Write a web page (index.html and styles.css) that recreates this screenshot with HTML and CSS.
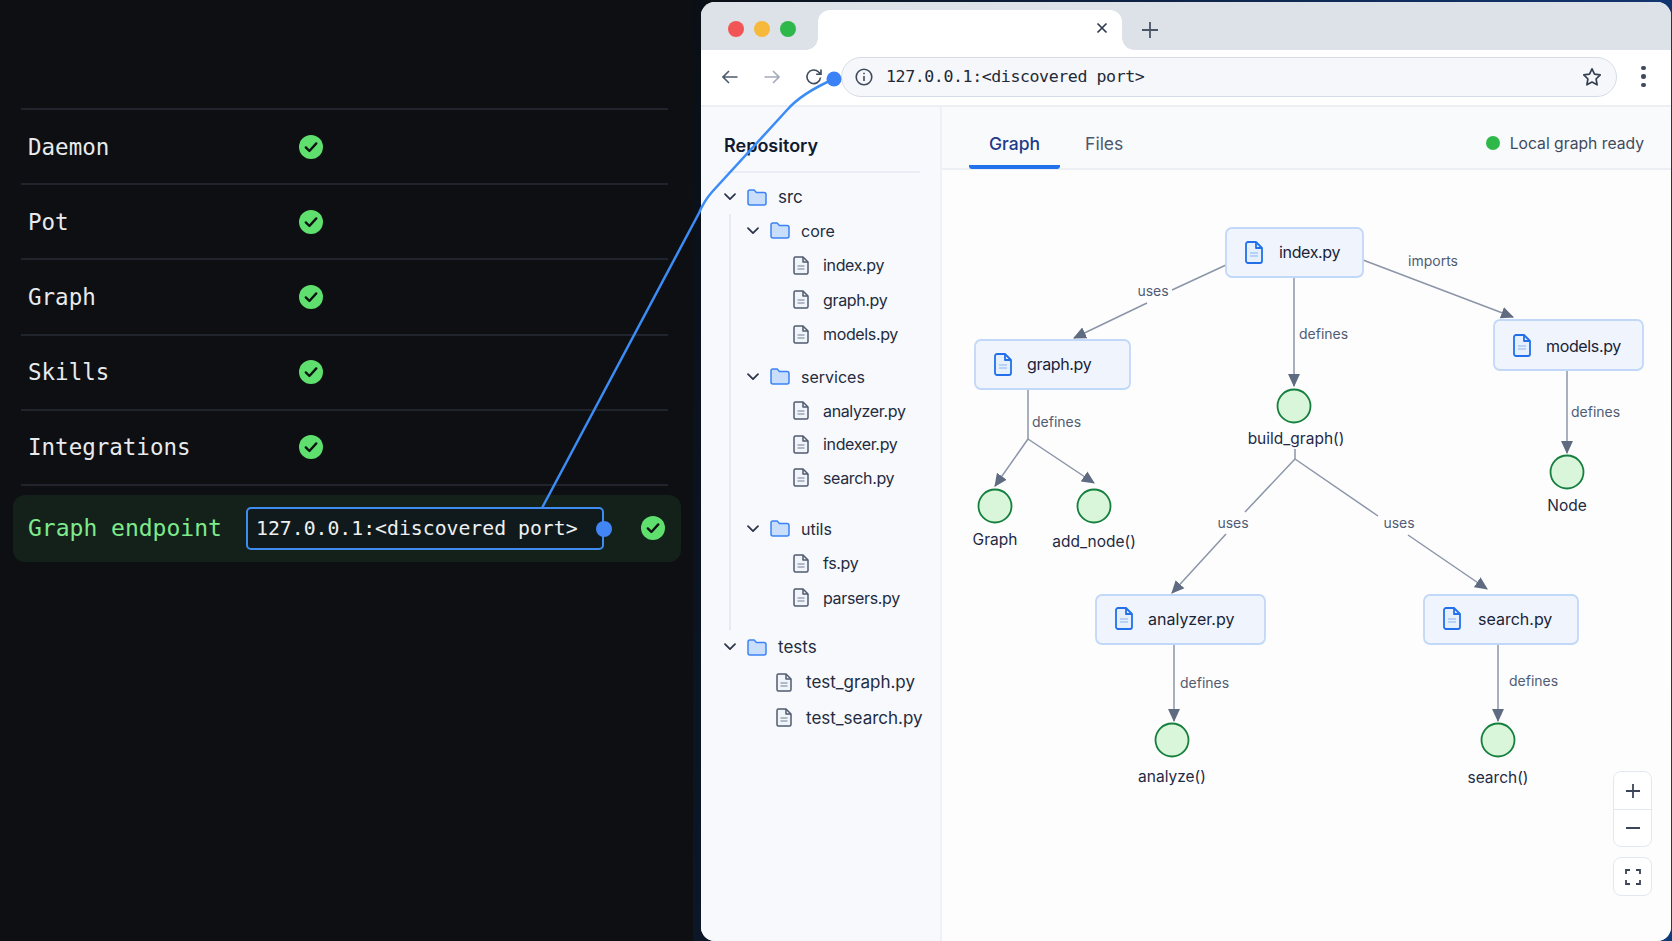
FILE: index.html
```html
<!DOCTYPE html>
<html>
  <head>
    <meta charset="utf-8">
    <title>Local graph</title>
    <link rel="stylesheet" href="styles.css">
  </head>
  <body>
    <svg class="defs" width="0" height="0">
      <symbol id="i-check" viewBox="0 0 24 24">
        <circle cx="12" cy="12" r="12" fill="#5fe06e"/>
        <path d="M6.8 12.4l3.6 3.6 6.9-7.6" fill="none" stroke="#0d1512" stroke-width="2.4" stroke-linecap="round" stroke-linejoin="round"/>
      </symbol>
      <symbol id="i-chevron" viewBox="0 0 12 8">
        <path d="M1 1.2l5 5 5-5" fill="none" stroke="#2b3448" stroke-width="1.7" stroke-linecap="round" stroke-linejoin="round"/>
      </symbol>
      <symbol id="i-folder" viewBox="0 0 20 17">
        <path d="M1 3a2 2 0 0 1 2-2h4.2l2.2 2.4H17a2 2 0 0 1 2 2V14a2 2 0 0 1-2 2H3a2 2 0 0 1-2-2z" fill="#c9defa" stroke="#3b82f6" stroke-width="1.5" stroke-linejoin="round"/>
      </symbol>
      <symbol id="i-file" viewBox="0 0 16 19">
        <path d="M1 2.5A1.5 1.5 0 0 1 2.5 1H10l5 5v10.5a1.5 1.5 0 0 1-1.5 1.5h-11A1.5 1.5 0 0 1 1 16.5z" fill="#f1f4f8" stroke="#505b70" stroke-width="1.5" stroke-linejoin="round"/>
        <path d="M10 1v5h5" fill="none" stroke="#505b70" stroke-width="1.5" stroke-linejoin="round"/>
        <path d="M4.5 10h7M4.5 13h7" stroke="#9aa5b7" stroke-width="1.4"/>
      </symbol>
      <symbol id="i-file-blue" viewBox="0 0 18 23">
        <path d="M1 3a2 2 0 0 1 2-2h8l6 6v13a2 2 0 0 1-2 2H3a2 2 0 0 1-2-2z" fill="#e6effc" stroke="#2170ea" stroke-width="1.8" stroke-linejoin="round"/>
        <path d="M11 1v6h6" fill="none" stroke="#2170ea" stroke-width="1.8" stroke-linejoin="round"/>
        <path d="M5 12h8M5 15h8" stroke="#a9c8f5" stroke-width="1.6"/>
      </symbol>
    </svg>

    <section class="status-panel">
      <div class="status-row"><span class="status-name">Daemon</span><svg class="check"><use href="#i-check"/></svg></div>
      <div class="status-row"><span class="status-name">Pot</span><svg class="check"><use href="#i-check"/></svg></div>
      <div class="status-row"><span class="status-name">Graph</span><svg class="check"><use href="#i-check"/></svg></div>
      <div class="status-row"><span class="status-name">Skills</span><svg class="check"><use href="#i-check"/></svg></div>
      <div class="status-row"><span class="status-name">Integrations</span><svg class="check"><use href="#i-check"/></svg></div>
      <div class="endpoint-divider"></div>
      <div class="endpoint-row">
        <span class="endpoint-name">Graph endpoint</span>
        <div class="endpoint-box">127.0.0.1:&lt;discovered port&gt;<i class="endpoint-dot"></i></div>
        <svg class="check"><use href="#i-check"/></svg>
      </div>
    </section>

    <section class="browser-area">
      <div class="browser">
        <div class="titlebar">
          <i class="light red"></i><i class="light amber"></i><i class="light green"></i>
          <div class="tab">
            <svg class="tab-close" viewBox="0 0 12 12"><path d="M1.5 1.5l9 9M10.5 1.5l-9 9"/></svg>
          </div>
          <svg class="tab-new" viewBox="0 0 16 16"><path d="M8 0v16M0 8h16"/></svg>
        </div>

        <div class="toolbar">
          <svg class="nav-icon" viewBox="0 0 16 14"><path d="M15.5 7H1M7 1L1 7l6 6"/></svg>
          <svg class="nav-icon forward" viewBox="0 0 16 14"><path d="M.5 7H15M9 1l6 6-6 6"/></svg>
          <svg class="nav-icon reload" viewBox="0 0 18 18"><path d="M15.5 9.5A6.8 6.8 0 1 1 13.6 4L16 6.300M16 1.500v4.800h-4.800"/></svg>
          <div class="addressbar">
            <svg class="info-icon" viewBox="0 0 18 18"><circle cx="9" cy="9" r="7.800"/><path d="M9 8v5M9 4.800v1.500"/></svg>
            <span class="address-text">127.0.0.1:&lt;discovered port&gt;</span>
            <svg class="star-icon" viewBox="0 0 20 20"><path d="M10 1.800l2.500 5.300 5.700.8-4.100 4.100 1 5.800L10 15.100l-5.100 2.700 1-5.800-4.100-4.100 5.700-.8z"/></svg>
          </div>
          <div class="menu-dots"><i></i><i></i><i></i></div>
        </div>

        <div class="content">
          <aside class="sidebar">
            <h2 class="sidebar-title">Repository</h2>
            <div class="tree">
              <div class="row root"><svg class="chev"><use href="#i-chevron"/></svg><svg class="folder"><use href="#i-folder"/></svg><span>src</span></div>
              <div class="src-children">
                <div class="row sub"><svg class="chev"><use href="#i-chevron"/></svg><svg class="folder"><use href="#i-folder"/></svg><span>core</span></div>
                <div class="row file"><svg class="doc"><use href="#i-file"/></svg><span>index.py</span></div>
                <div class="row file"><svg class="doc"><use href="#i-file"/></svg><span>graph.py</span></div>
                <div class="row file"><svg class="doc"><use href="#i-file"/></svg><span>models.py</span></div>
                <div class="row sub services"><svg class="chev"><use href="#i-chevron"/></svg><svg class="folder"><use href="#i-folder"/></svg><span>services</span></div>
                <div class="row file tight"><svg class="doc"><use href="#i-file"/></svg><span>analyzer.py</span></div>
                <div class="row file tight"><svg class="doc"><use href="#i-file"/></svg><span>indexer.py</span></div>
                <div class="row file tight"><svg class="doc"><use href="#i-file"/></svg><span>search.py</span></div>
                <div class="row sub utils"><svg class="chev"><use href="#i-chevron"/></svg><svg class="folder"><use href="#i-folder"/></svg><span>utils</span></div>
                <div class="row file"><svg class="doc"><use href="#i-file"/></svg><span>fs.py</span></div>
                <div class="row file"><svg class="doc"><use href="#i-file"/></svg><span>parsers.py</span></div>
              </div>
              <div class="row root"><svg class="chev"><use href="#i-chevron"/></svg><svg class="folder"><use href="#i-folder"/></svg><span>tests</span></div>
              <div class="row test-file"><svg class="doc"><use href="#i-file"/></svg><span>test_graph.py</span></div>
              <div class="row test-file"><svg class="doc"><use href="#i-file"/></svg><span>test_search.py</span></div>
            </div>
          </aside>

          <main class="main">
            <div class="main-head">
              <div class="main-tab active">Graph</div>
              <div class="main-tab">Files</div>
              <div class="ready"><i class="ready-dot"></i>Local graph ready</div>
            </div>
            <div class="canvas">
              <!-- viewBox uses page coordinates -->
              <svg class="graph" viewBox="942 170 729 771">
                <defs>
                  <marker id="arrow" viewBox="0 0 12 12" refX="11" refY="6" markerWidth="13" markerHeight="13" markerUnits="userSpaceOnUse" orient="auto">
                    <path d="M0 0.500L12 6 0 11.500z" fill="#5f6b80"/>
                  </marker>
                </defs>

                <path class="edge" d="M1226 265L1172 290"/>
                <path class="edge tip" d="M1147 303L1074 338"/>
                <path class="edge tip" d="M1294 277V386"/>
                <path class="edge tip" d="M1363 260L1513 317"/>
                <path class="edge tip" d="M1567 370V453"/>
                <path class="edge" d="M1028 389V439"/>
                <path class="edge tip" d="M1028 439L995 486"/>
                <path class="edge tip" d="M1028 439L1094 483"/>
                <path class="edge" d="M1295 449V459L1245 512M1295 459L1378 516"/>
                <path class="edge tip" d="M1226 534L1172 593"/>
                <path class="edge tip" d="M1408 535L1487 589"/>
                <path class="edge tip" d="M1174 644V721"/>
                <path class="edge tip" d="M1498 644V721"/>

                <text class="edge-label middle" x="1153" y="290">uses</text>
                <text class="edge-label" x="1299" y="333">defines</text>
                <text class="edge-label middle" x="1433" y="260">imports</text>
                <text class="edge-label" x="1032" y="421">defines</text>
                <text class="edge-label" x="1571" y="411">defines</text>
                <text class="edge-label middle" x="1233" y="522">uses</text>
                <text class="edge-label middle" x="1399" y="522">uses</text>
                <text class="edge-label" x="1180" y="682">defines</text>
                <text class="edge-label" x="1509" y="680">defines</text>

                <rect class="box" x="1226" y="228" width="137" height="49" rx="6"/>
                <use href="#i-file-blue" x="1245" y="241" width="18" height="23"/>
                <text class="box-label narrow" x="1279" y="252">index.py</text>

                <rect class="box" x="975" y="340" width="155" height="49" rx="6"/>
                <use href="#i-file-blue" x="994" y="353" width="18" height="23"/>
                <text class="box-label narrow" x="1027" y="364">graph.py</text>

                <rect class="box" x="1494" y="320" width="149" height="50" rx="6"/>
                <use href="#i-file-blue" x="1513" y="334" width="18" height="23"/>
                <text class="box-label narrow" x="1546" y="346">models.py</text>

                <rect class="box" x="1096" y="595" width="169" height="49" rx="6"/>
                <use href="#i-file-blue" x="1115" y="607" width="18" height="23"/>
                <text class="box-label" x="1148" y="619">analyzer.py</text>

                <rect class="box" x="1424" y="595" width="154" height="49" rx="6"/>
                <use href="#i-file-blue" x="1443" y="607" width="18" height="23"/>
                <text class="box-label" x="1478" y="619">search.py</text>

                <circle class="fn" cx="1294" cy="406" r="16.500"/>
                <circle class="fn" cx="995" cy="506" r="16.500"/>
                <circle class="fn" cx="1094" cy="506" r="16.500"/>
                <circle class="fn" cx="1567" cy="472" r="16.500"/>
                <circle class="fn" cx="1172" cy="740" r="16.500"/>
                <circle class="fn" cx="1498" cy="740" r="16.500"/>

                <text class="fn-label" x="1296" y="438">build_graph()</text>
                <text class="fn-label" x="995" y="539">Graph</text>
                <text class="fn-label" x="1094" y="541">add_node()</text>
                <text class="fn-label" x="1567" y="505">Node</text>
                <text class="fn-label" x="1172" y="776">analyze()</text>
                <text class="fn-label" x="1498" y="777">search()</text>
              </svg>

              <div class="zoom-tools">
                <div class="zoom-group">
                  <div class="zoom-btn"><svg viewBox="0 0 16 16"><path d="M8 1v14M1 8h14"/></svg></div>
                  <div class="zoom-btn"><svg viewBox="0 0 16 16"><path d="M1 8h14"/></svg></div>
                </div>
                <div class="zoom-group">
                  <div class="zoom-btn"><svg viewBox="0 0 16 16"><path d="M1 5V1h4M11 1h4v4M15 11v4h-4M5 15H1v-4"/></svg></div>
                </div>
              </div>
            </div>
          </main>
        </div>
      </div>
    </section>

    <!-- blue connector from the endpoint field to the address bar -->
    <svg class="connector" viewBox="0 0 1672 941">
      <path d="M542 508L699 213Q704 201 712 192L787 110Q802 93 834 79"/>
      <circle cx="834" cy="79" r="7.500"/>
    </svg>
  </body>
</html>
```

FILE: styles.css
```css
* {
  box-sizing: border-box;
}

body {
  display: flex;
  width: 1672px;
  height: 941px;
  margin: 0;
  overflow: hidden;
  background-color: #0d0f13;
  font-family: "Inter", "Liberation Sans", sans-serif;
}

.defs {
  position: absolute;
}

/* left terminal panel */
.status-panel {
  width: 693px;
  flex-shrink: 0;
  padding: 108px 25px 0 21px;
  background-color: #0d0f13;
  font-family: "DejaVu Sans Mono", "Liberation Mono", monospace;
}

.status-row {
  display: flex;
  align-items: center;
  height: 75.200px;
  padding-left: 7px;
  border-top: 2px solid #20242d;
  color: #e8eaec;
  font-size: 22.500px;
}

.status-name {
  width: 271px;
}

.check {
  width: 24px;
  height: 24px;
}

.endpoint-divider {
  height: 2px;
  background-color: #20242d;
}

.endpoint-row {
  display: flex;
  align-items: center;
  height: 67px;
  margin: 9px -13px 0 -8px;
  padding-left: 15px;
  border-radius: 12px;
  background-color: #14211a;
}

.endpoint-name {
  width: 218px;
  color: #7eea8b;
  font-size: 23px;
}

.endpoint-box {
  position: relative;
  width: 358px;
  height: 43px;
  padding-left: 8px;
  border: 2px solid #3f8cf0;
  border-radius: 5px;
  background-color: #101a1c;
  color: #eef0f1;
  font-size: 19.800px;
  line-height: 39px;
  white-space: nowrap;
}

.endpoint-dot {
  position: absolute;
  top: 12px;
  right: -10px;
  width: 16px;
  height: 16px;
  border-radius: 50%;
  background-color: #4285f4;
}

.endpoint-row .check {
  margin-left: 37px;
}

/* browser window */
.browser-area {
  flex: 1;
  padding: 2px 1px 0 8px;
  background: linear-gradient(100deg, #0a0f16 0%, #102c5c 60%, #123a7a 100%);
}

.browser {
  display: flex;
  flex-direction: column;
  height: 939px;
  overflow: hidden;
  border-radius: 14px;
  background-color: #fff;
}

.titlebar {
  display: flex;
  align-items: flex-end;
  height: 48px;
  padding-left: 27px;
  background-color: #dde1e8;
}

.light {
  width: 16px;
  height: 16px;
  margin: 0 10px 13px 0;
  border-radius: 50%;
}

.red {
  background-color: #f25555;
}

.amber {
  background-color: #f6b93b;
}

.green {
  background-color: #2fb84a;
  margin-right: 22px;
}

.tab {
  position: relative;
  display: flex;
  align-items: center;
  justify-content: flex-end;
  width: 304px;
  height: 40px;
  padding-right: 14px;
  border-radius: 12px 12px 0 0;
  background-color: #fff;
}

.tab::before,
.tab::after {
  content: "";
  position: absolute;
  bottom: 0;
  width: 12px;
  height: 12px;
}

.tab::before {
  left: -12px;
  background: radial-gradient(circle at 0 0, #dde1e8 11.500px, #fff 12px);
}

.tab::after {
  right: -12px;
  background: radial-gradient(circle at 100% 0, #dde1e8 11.500px, #fff 12px);
}

.tab-close {
  width: 12px;
  height: 12px;
  margin-bottom: 4px;
  fill: none;
  stroke: #2f3a4d;
  stroke-width: 1.700;
}

.tab-new {
  width: 16px;
  height: 16px;
  margin: 0 0 12px 20px;
  fill: none;
  stroke: #4b5568;
  stroke-width: 1.800;
}

.toolbar {
  display: flex;
  align-items: center;
  height: 57px;
  padding: 0 0 2px 21px;
  border-bottom: 2px solid #eceff4;
}

.nav-icon {
  width: 16px;
  height: 14px;
  margin-right: 26px;
  fill: none;
  stroke: #4f5a6d;
  stroke-width: 1.600;
}

.nav-icon.forward {
  margin-right: 25px;
  stroke: #a3abb9;
}

.nav-icon.reload {
  width: 18px;
  height: 18px;
  margin-right: 18px;
  stroke: #3f4a5c;
}

.addressbar {
  display: flex;
  align-items: center;
  width: 776px;
  height: 40px;
  padding: 0 14px 0 13px;
  border: 1.500px solid #d6dce7;
  border-radius: 20px;
  background-color: #f5f7fb;
}

.info-icon {
  width: 18px;
  height: 18px;
  fill: none;
  stroke: #3f4a5c;
  stroke-width: 1.600;
}

.address-text {
  flex: 1;
  margin-left: 13px;
  color: #1f2937;
  font-family: "DejaVu Sans Mono", "Liberation Mono", monospace;
  font-size: 16.600px;
  letter-spacing: -0.420px;
}

.star-icon {
  width: 20px;
  height: 20px;
  fill: none;
  stroke: #353f51;
  stroke-width: 1.700;
  stroke-linejoin: round;
}

.menu-dots {
  display: flex;
  flex-direction: column;
  gap: 4px;
  margin-left: 24px;
}

.menu-dots i {
  width: 4.500px;
  height: 4.500px;
  border-radius: 50%;
  background-color: #3f4a5c;
}

.content {
  display: flex;
  flex: 1;
  min-height: 0;
}

/* repository tree */
.sidebar {
  width: 241px;
  flex-shrink: 0;
  border-right: 2px solid #eef1f6;
  background-color: #f7f9fc;
  color: #232c40;
  font-size: 16px;
}

.sidebar-title {
  height: 66px;
  margin: 0 20px 0 23px;
  border-bottom: 2px solid #eaeef4;
  color: #111a2e;
  font-size: 18px;
  font-weight: 600;
  line-height: 78px;
}

.tree {
  padding-top: 7px;
}

.row {
  display: flex;
  align-items: center;
  height: 34.500px;
}

.row.tight {
  height: 33.500px;
}

.chev {
  width: 12px;
  height: 8px;
  flex-shrink: 0;
  margin-right: 11px;
}

.folder {
  width: 20px;
  height: 17px;
  flex-shrink: 0;
  margin-right: 11px;
}

.doc {
  width: 16px;
  height: 19px;
  flex-shrink: 0;
  margin-right: 14px;
}

.root {
  padding-left: 23px;
  font-size: 17px;
}

.src-children {
  margin: -1px 0 0 28px;
  padding-bottom: 15px;
  border-left: 2px solid #e6eaf1;
}

.sub {
  padding-left: 16px;
}

.services {
  margin-top: 8px;
}

.utils {
  margin-top: 17px;
}

.file {
  padding-left: 62px;
  letter-spacing: -0.350px;
}

.test-file {
  height: 35.500px;
  padding-left: 75px;
  font-size: 17px;
}

/* main graph area */
.main {
  display: flex;
  flex: 1;
  flex-direction: column;
  min-width: 0;
  background-color: #fdfdfe;
}

.main-head {
  display: flex;
  align-items: stretch;
  height: 63px;
  padding: 0 27px;
  border-bottom: 2px solid #eceff4;
  background-color: #f9fafc;
}

.main-tab {
  display: flex;
  align-items: center;
  height: 62px;
  padding: 10px 18px 0;
  color: #4c586c;
  font-size: 17.500px;
}

.main-tab.active {
  margin-right: 7px;
  padding: 14px 20px 0;
  border-bottom: 4px solid #2271ec;
  border-radius: 0 0 3px 3px;
  color: #1e3a8a;
  font-weight: 500;
}

.ready {
  display: flex;
  align-items: center;
  gap: 10px;
  margin-left: auto;
  padding-top: 11px;
  color: #3f4a5f;
  font-size: 15.700px;
}

.ready-dot {
  width: 14px;
  height: 14px;
  border-radius: 50%;
  background-color: #2fb84a;
}

.canvas {
  position: relative;
  flex: 1;
  min-height: 0;
}

.graph {
  display: block;
  width: 100%;
  height: 100%;
}

.edge {
  fill: none;
  stroke: #8b95a8;
  stroke-width: 1.500;
}

.edge.tip {
  marker-end: url(#arrow);
}

.edge-label {
  fill: #505c74;
  font-size: 14px;
  dominant-baseline: central;
}

.edge-label.middle {
  text-anchor: middle;
}

.box {
  fill: #f0f5fd;
  stroke: #c2d8f8;
  stroke-width: 1.800;
}

.box-label {
  fill: #1a2338;
  font-size: 16px;
  dominant-baseline: central;
}

.box-label.narrow {
  letter-spacing: -0.350px;
}

.fn {
  fill: #d9f5da;
  stroke: #15803d;
  stroke-width: 1.800;
}

.fn-label {
  fill: #1f2a44;
  font-size: 15.500px;
  text-anchor: middle;
  dominant-baseline: central;
}

.zoom-tools {
  position: absolute;
  top: 601px;
  right: 19px;
  display: flex;
  flex-direction: column;
  gap: 10px;
  width: 39px;
}

.zoom-group {
  border: 1.500px solid #e3e8f0;
  border-radius: 8px;
  background-color: #fff;
}

.zoom-btn {
  display: flex;
  align-items: center;
  justify-content: center;
  height: 37px;
}

.zoom-btn + .zoom-btn {
  border-top: 1.500px solid #e3e8f0;
}

.zoom-btn svg {
  width: 16px;
  height: 16px;
  fill: none;
  stroke: #3a4558;
  stroke-width: 1.800;
}

/* connector drawn over both panels */
.connector {
  position: absolute;
  top: 0;
  left: 0;
  width: 1672px;
  height: 941px;
  pointer-events: none;
}

.connector path {
  fill: none;
  stroke: #3b8cf5;
  stroke-width: 2.500;
  stroke-linejoin: round;
}

.connector circle {
  fill: #3b82f6;
}
```
